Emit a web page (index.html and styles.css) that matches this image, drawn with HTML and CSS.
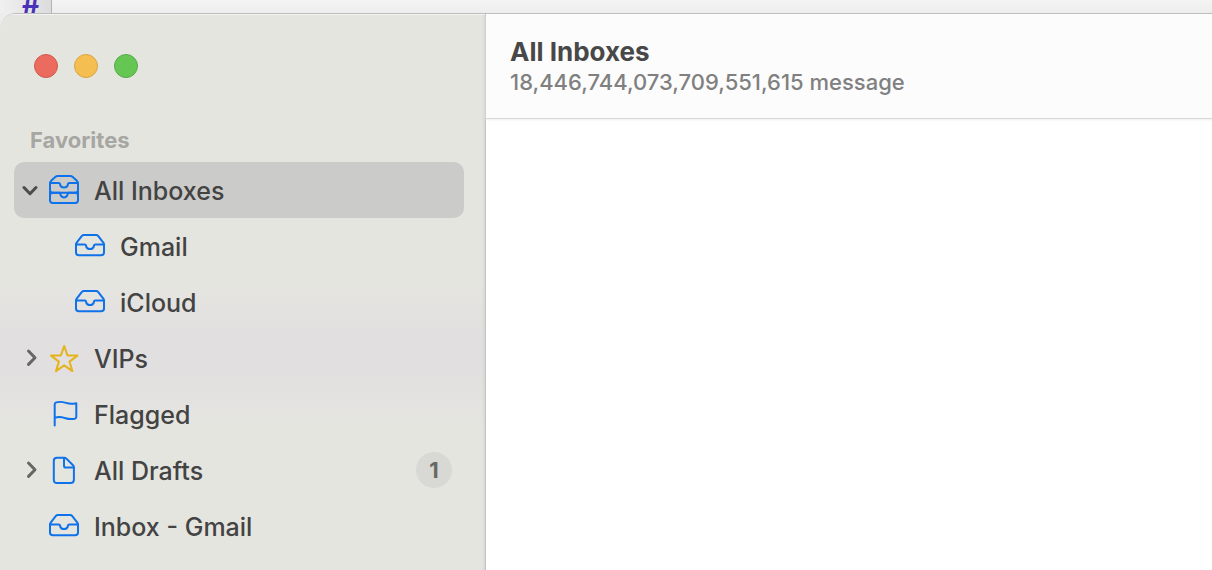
FILE: index.html
```html
<!DOCTYPE html>
<html lang="en">

<head>
    <meta charset="UTF-8">
    <meta name="viewport" content="width=device-width, initial-scale=1.0">
    <title>All Inboxes</title>
    <link rel="stylesheet" href="styles.css">
</head>

<body>
    <!-- Shared icon shapes -->
    <svg class="sprite" aria-hidden="true">
        <symbol id="tray" viewBox="0 0 32 32">
            <path d="M9.8 5h12.4c.8 0 1.4.3 1.9.9l5.2 6.7c.5.7.7 1.2.7 2v7.9c0 1.900-1 2.800-2.900 2.800H4.900C3 25.300 2 24.400 2 22.500v-7.900c0-.8.2-1.300.7-2l5.200-6.700c.5-.6 1.100-.9 1.900-.9z" />
            <path d="M2 14.500h8.800c.7 0 1.100.4 1.200 1 .3 2.200 1.900 3.600 4 3.600s3.700-1.400 4-3.600c.1-.6.5-1 1.200-1H30" />
        </symbol>
        <symbol id="trays" viewBox="0 0 32 32">
            <path d="M9.500 2h13c.8 0 1.400.3 2 .8l4.600 4.300c.6.6.9 1.200.9 2v17.200c0 1.800-1 2.700-2.800 2.700H4.800C3 29 2 28.100 2 26.300V9.100c0-.8.3-1.400.9-2l4.600-4.300c.6-.5 1.200-.8 2-.8z" />
            <path d="M2 9h8.800c.7 0 1.100.4 1.200 1 .3 2.200 1.900 3.500 4 3.500s3.700-1.300 4-3.500c.1-.6.5-1 1.200-1H30" />
            <path d="M2 16c0 1.800 1 2.700 2.800 2.700h22.400c1.800 0 2.800-.9 2.800-2.700" />
            <path d="M2 21.500c0-1.800 1-2.800 2.800-2.800H12c.3 2.900 1.900 4.700 4 4.700s3.700-1.800 4-4.700h7.200c1.800 0 2.800 1 2.800 2.800" />
        </symbol>
        <symbol id="star" viewBox="0 0 32 32">
            <path d="M16.200 4l3.300 9.400 9.900.2-7.900 6 2.900 9.500-8.200-5.700-8.200 5.700 2.900-9.500-7.900-6 9.900-.2z" />
        </symbol>
        <symbol id="flag" viewBox="0 0 32 32">
            <path d="M6.700 27.500V6.200c0-.8.300-1.300 1-1.600 3.800-1.500 7.300-.6 10.300.3 3.200 1 6 1.300 10.300.3v13.900c0 .8-.4 1.300-1.100 1.500-4.500 1.300-7.500.3-10.700-.7-3-.9-6.300-1.300-9.800 0" />
        </symbol>
        <symbol id="file" viewBox="0 0 32 32">
            <path d="M9 3.700h7.200c.9 0 1.600.3 2.200.9l6.600 6.700c.6.6.9 1.300.9 2.200v12.300c0 2.100-1.100 3.200-3.200 3.200H9c-2.100 0-3.200-1.100-3.200-3.200V6.900c0-2.100 1.100-3.200 3.200-3.200z" />
            <path d="M16 4v7.700c0 1.300.6 1.900 1.900 1.900h7.700" />
        </symbol>
        <symbol id="chevron-down" viewBox="0 0 20 20">
            <path d="M2 7.500l6 6.200 6-6.200" />
        </symbol>
        <symbol id="chevron-right" viewBox="0 0 20 20">
            <path d="M6.500 3l6.500 6.700-6.500 6.700" />
        </symbol>
    </svg>

    <div class="desktop">
        <div class="gutter">#</div>
    </div>

    <div class="window">
        <aside class="sidebar">
            <div class="controls">
                <button class="control close" aria-label="Close"></button>
                <button class="control minimize" aria-label="Minimize"></button>
                <button class="control zoom" aria-label="Zoom"></button>
            </div>
            <h2 class="section">Favorites</h2>
            <nav class="mailboxes">
                <div class="row selected">
                    <button class="toggle" aria-label="Collapse All Inboxes"><svg><use href="#chevron-down" /></svg></button>
                    <a href="#all"><svg class="icon"><use href="#trays" /></svg>All Inboxes</a>
                </div>
                <div class="row child">
                    <a href="#gmail"><svg class="icon"><use href="#tray" /></svg>Gmail</a>
                </div>
                <div class="row child">
                    <a href="#icloud"><svg class="icon"><use href="#tray" /></svg>iCloud</a>
                </div>
                <div class="row">
                    <button class="toggle" aria-label="Expand VIPs"><svg><use href="#chevron-right" /></svg></button>
                    <a href="#vips"><svg class="icon yellow"><use href="#star" /></svg>VIPs</a>
                </div>
                <div class="row leaf">
                    <a href="#flagged"><svg class="icon"><use href="#flag" /></svg>Flagged</a>
                </div>
                <div class="row">
                    <button class="toggle" aria-label="Expand All Drafts"><svg><use href="#chevron-right" /></svg></button>
                    <a href="#drafts"><svg class="icon"><use href="#file" /></svg>All Drafts</a>
                    <span class="count">1</span>
                </div>
                <div class="row leaf">
                    <a href="#inbox-gmail"><svg class="icon"><use href="#tray" /></svg>Inbox - Gmail</a>
                </div>
            </nav>
        </aside>

        <main class="messages">
            <header class="toolbar">
                <h1>All Inboxes</h1>
                <p>18,446,744,073,709,551,615 message</p>
            </header>
        </main>
    </div>
</body>

</html>
```

FILE: styles.css
```css
* {
    box-sizing: border-box;
}

body {
    display: flex;
    flex-direction: column;
    height: 100vh;
    margin: 0;
    overflow: hidden;
    font-family: Inter, 'Liberation Sans', sans-serif;
    font-weight: 450;
    background-color: #ededed;
    color: #434343;
}

h1,
h2,
p {
    margin: 0;
}

button {
    padding: 0;
    border: none;
    background: none;
    cursor: pointer;
}

svg {
    display: block;
    fill: none;
    stroke: currentColor;
    stroke-width: 2;
    stroke-linecap: round;
    stroke-linejoin: round;
}

.sprite {
    display: none;
}

/* Window behind */
.desktop {
    display: flex;
    height: 13px;
    overflow: hidden;
    background: linear-gradient(#f4f4f4, #ededed);
}

.gutter {
    display: flex;
    align-items: flex-end;
    width: 52px;
    padding-left: 22px;
    border-right: 1px solid #b4b4b4;
    background: linear-gradient(90deg, #f0f0f0, #dcdcdc);
    color: #4a32b8;
    font-size: 28px;
    font-weight: 700;
    line-height: 20px;
}

/* Mail window */
.window {
    display: flex;
    flex: 1;
    border-top: 1px solid #bdbdbd;
    border-top-left-radius: 16px;
    overflow: hidden;
    background-color: #fff;
}

.sidebar {
    flex: 0 0 486px;
    padding: 0 21px 0 14px;
    border-right: 1px solid #c4c4c1;
    background: linear-gradient(#e5e5e0 270px, #e2dfe0 320px, #e2dfe0 360px, #e5e5e0 410px);
    box-shadow: inset 0 1px #f3f3f1, inset -3px 0 3px -2px #d2d2ce;
}

.controls {
    display: flex;
    gap: 16px;
    padding: 40px 20px 48px;
}

.control {
    width: 24px;
    height: 24px;
    border: 1px solid;
    border-radius: 50%;
}

.close {
    background-color: #eb6b5e;
    border-color: #d35a4e;
}

.minimize {
    background-color: #f4bf50;
    border-color: #d9a544;
}

.zoom {
    background-color: #65c654;
    border-color: #54ad45;
}

.section {
    margin-bottom: 8px;
    padding-left: 16px;
    font-size: 22px;
    font-weight: 700;
    line-height: 28px;
    color: #a6a6a2;
}

.row {
    display: flex;
    align-items: center;
    height: 56px;
    padding: 0 12px 0 8px;
    border-radius: 10px;
}

.row a {
    display: flex;
    flex: 1;
    align-items: center;
    gap: 14px;
    padding-top: 2px;
    color: inherit;
    font-size: 25px;
    line-height: 34px;
    text-decoration: none;
}

.selected {
    background-color: #cbcbc9;
}

.leaf {
    padding-left: 34px;
}

.child {
    padding-left: 60px;
}

.toggle {
    margin-right: 6px;
    color: #666665;
}

.toggle svg {
    width: 20px;
    height: 20px;
    stroke-width: 3;
}

.selected .toggle {
    color: #4c4c4c;
}

.icon {
    width: 32px;
    height: 32px;
    margin-bottom: 2px;
    color: #0f72ea;
}

.yellow {
    color: #e5b31c;
}

.count {
    width: 36px;
    border-radius: 18px;
    background-color: #d8d8d4;
    color: #686864;
    font-size: 22px;
    font-weight: 700;
    line-height: 36px;
    text-align: center;
}

.messages {
    flex: 1;
}

.toolbar {
    padding: 22px 24px;
    border-bottom: 1px solid #d9d9d9;
    background-color: #fcfcfc;
    box-shadow: 0 1px 2px #eee;
}

.toolbar h1 {
    font-size: 26px;
    font-weight: 700;
    line-height: 32px;
    color: #484848;
}

.toolbar p {
    font-size: 22px;
    line-height: 28px;
    color: #808080;
}
```
